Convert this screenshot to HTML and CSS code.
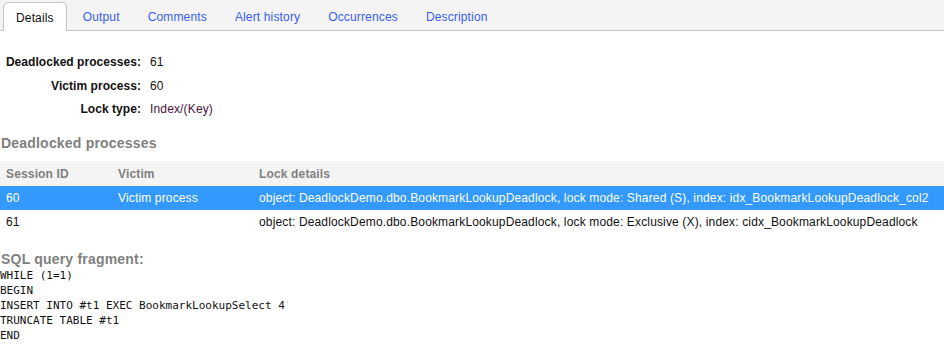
FILE: index.html
```html
<!DOCTYPE html>
<html lang="en">
<head>
    <meta charset="UTF-8">
    <title>Deadlock details</title>
    <link rel="stylesheet" href="styles.css">
</head>
<body>
    <ul class="tabs">
        <li class="tab active">Details</li>
        <li class="tab">Output</li>
        <li class="tab">Comments</li>
        <li class="tab">Alert history</li>
        <li class="tab">Occurrences</li>
        <li class="tab">Description</li>
    </ul>

    <!-- Summary -->
    <dl class="summary">
        <dt>Deadlocked processes:</dt>
        <dd>61</dd>
        <dt>Victim process:</dt>
        <dd>60</dd>
        <dt>Lock type:</dt>
        <dd class="lock-type">Index/(Key)</dd>
    </dl>

    <h2 class="section-title">Deadlocked processes</h2>
    <table class="processes">
        <thead>
            <tr>
                <th class="col-session">Session ID</th>
                <th class="col-victim">Victim</th>
                <th>Lock details</th>
            </tr>
        </thead>
        <tbody>
            <tr class="selected">
                <td>60</td>
                <td>Victim process</td>
                <td>object: DeadlockDemo.dbo.BookmarkLookupDeadlock, lock mode: Shared (S), index: idx_BookmarkLookupDeadlock_col2</td>
            </tr>
            <tr>
                <td>61</td>
                <td></td>
                <td>object: DeadlockDemo.dbo.BookmarkLookupDeadlock, lock mode: Exclusive (X), index: cidx_BookmarkLookupDeadlock</td>
            </tr>
        </tbody>
    </table>

    <h2 class="section-title sql-title">SQL query fragment:</h2>
    <pre class="sql">WHILE (1=1)
BEGIN
INSERT INTO #t1 EXEC BookmarkLookupSelect 4
TRUNCATE TABLE #t1
END</pre>
</body>
</html>
```

FILE: styles.css
```css
body {
    margin: 0;
    font-family: "Liberation Sans", Arial, sans-serif;
    font-size: 12px;
    letter-spacing: 0.15px;
    color: #111;
    background: #fff;
}

.tabs {
    display: flex;
    margin: 0;
    padding: 2px 0 0 3px;
    list-style: none;
    background-color: #f4f4f4;
    border-bottom: 1px solid #c4c4c4;
    height: 28px;
}

.tab {
    padding: 8px 14px 0 14px;
    color: #3a5cf0;
}

.tab.active {
    color: #111;
    background-color: #fff;
    border: 1px solid #c4c4c4;
    border-bottom: none;
    border-radius: 5px 5px 0 0;
    margin-bottom: -1px;
    margin-right: 2px;
    padding: 8px 12px 0 12px;
}

.summary {
    display: grid;
    grid-template-columns: 141px auto;
    column-gap: 9px;
    row-gap: 8.5px;
    margin: 24px 0 0 0;
}

.summary dt {
    font-weight: bold;
    text-align: right;
    line-height: 15px;
    letter-spacing: 0.05px;
}

.summary dd {
    margin: 0;
    line-height: 15px;
}

.summary .lock-type {
    color: #4a1040;
}

.section-title {
    margin: 18px 0 0 1px;
    font-size: 14px;
    line-height: 16px;
    font-weight: bold;
    letter-spacing: 0.2px;
    color: #808080;
}

.processes {
    width: 100%;
    margin-top: 10px;
    border-collapse: collapse;
}

.processes th {
    background-color: #f4f4f4;
    color: #808080;
    text-align: left;
    font-weight: bold;
    height: 25px;
    padding: 0 6px;
}

.processes td {
    height: 24px;
    padding: 0 6px;
}

.processes .col-session {
    width: 100px;
}

.processes .col-victim {
    width: 129px;
}

.processes tr.selected td {
    background-color: #3399ff;
    color: #fff;
}

.sql-title {
    margin-top: 17px;
}

.sql {
    margin: 1px 0 0 0;
    font-family: "DejaVu Sans Mono", monospace;
    font-size: 11px;
    line-height: 15px;
    letter-spacing: 0;
    color: #111;
}
```
